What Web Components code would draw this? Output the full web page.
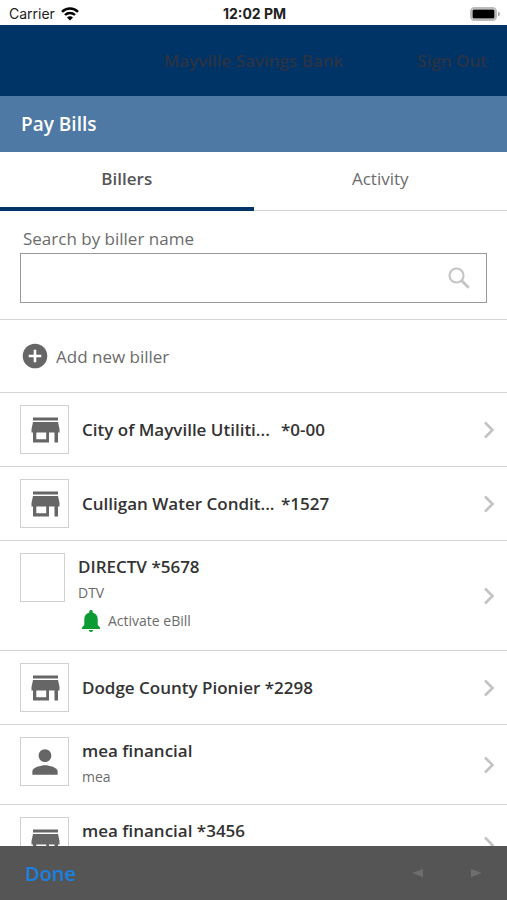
<!DOCTYPE html>
<html lang="en">
<head>
  <meta charset="utf-8">
  <meta name="viewport" content="width=device-width, initial-scale=1">
  <title>Pay Bills</title>
  <style>
    body {
      margin: 0;
      background: #fff;
      font-family: "Open Sans", "Noto Sans", sans-serif;
      font-size: 17px;
      color: #6b6b6b;
    }
  </style>
</head>
<body>

<pay-app>
  <status-bar slot="top" carrier="Carrier" time="12:02 PM"></status-bar>
  <bank-header slot="top" bank="Mayville Savings Bank"></bank-header>
  <page-title slot="top">Pay Bills</page-title>
  <tab-bar slot="top" tabs="Billers,Activity"></tab-bar>

  <biller-search label="Search by biller name"></biller-search>
  <add-biller>Add new biller</add-biller>
  <biller-row icon="store" account="*0-00" clipped>City of Mayville Utiliti...</biller-row>
  <biller-row icon="store" account="*1527" clipped>Culligan Water Condit...</biller-row>
  <biller-row icon="none" sub="DTV" ebill="Activate eBill">DIRECTV *5678</biller-row>
  <biller-row icon="store">Dodge County Pionier *2298</biller-row>
  <biller-row icon="person" sub="mea">mea financial</biller-row>
  <biller-row icon="store" sub="mea">mea financial *3456</biller-row>

  <tool-bar slot="bottom"></tool-bar>
</pay-app>

<script>
const icons = {
  store: `<svg width="30" height="30" viewBox="0 0 30 30" fill="#666"><path d="M3 2.500h25v3H3zM3 7h25l1.500 7v3.500H28V27.500h-3.500v-10H19v10H3v-10H1.500V14zM6.300 17.500v6.800h9.900v-6.800z" fill-rule="evenodd"/></svg>`,
  person: `<svg width="38" height="38" viewBox="0 0 24 24" fill="#666"><path d="M12 12c2.210 0 4-1.790 4-4s-1.790-4-4-4-4 1.790-4 4 1.790 4 4 4zm0 2c-2.670 0-8 1.340-8 4v2h16v-2c0-2.660-5.330-4-8-4z"/></svg>`,
  none: ''
}

class PayApp extends HTMLElement {
  constructor() {
    super();
    this.attachShadow({mode: 'open'}).innerHTML = `
    <style>
      :host {
        display: flex;
        flex-direction: column;
        height: 100vh;
      }
      main {
        flex: 1;
        min-height: 0;
        overflow: hidden;
      }
    </style>
    <slot name="top"></slot>
    <main><slot></slot></main>
    <slot name="bottom"></slot>`;
  }
}

class StatusBar extends HTMLElement {
  constructor() {
    super();
    this.attachShadow({mode: 'open'}).innerHTML = `
    <style>
      :host {
        display: grid;
        grid-template-columns: 1fr auto 1fr;
        align-items: center;
        height: 25px;
        padding: 2px 7px 0 9px;
        box-sizing: border-box;
        font-family: Inter, "Liberation Sans", sans-serif;
        font-size: 14px;
        color: #222;
      }
      .carrier {
        display: flex;
        align-items: center;
        gap: 6px;
      }
      .time {
        font-weight: 700;
      }
      .battery {
        justify-self: end;
      }
      svg {
        display: block;
      }
    </style>
    <span class="carrier">${this.getAttribute('carrier')}
      <svg width="18" height="14" viewBox="0 0 18 14" fill="none" stroke="#000" stroke-width="2.400">
        <path d="M1 4.800a11.400 11.400 0 0 1 16 0M4 8a7.100 7.100 0 0 1 10 0"/>
        <path d="M9 13.500 6 10.500a4.200 4.200 0 0 1 6 0z" fill="#000" stroke="none"/>
      </svg>
    </span>
    <span class="time">${this.getAttribute('time')}</span>
    <svg class="battery" width="30" height="14" viewBox="0 0 30 14">
      <rect x="1" y="1" width="25" height="12" rx="3.500" fill="#fff" stroke="#bbb" stroke-width="2"/>
      <rect x="2.500" y="2.500" width="22" height="9" rx="1.500" fill="#000"/>
      <path d="M28 4.500q2 .800 2 2.500t-2 2.500z" fill="#aaa"/>
    </svg>`;
  }
}

class BankHeader extends HTMLElement {
  constructor() {
    super();
    this.attachShadow({mode: 'open'}).innerHTML = `
    <style>
      :host {
        display: grid;
        grid-template-columns: 1fr auto 1fr;
        align-items: center;
        height: 71px;
        padding: 0 20px;
        background: #003366;
        color: #2b3445;
        font-weight: 600;
      }
      .bank {
        grid-column: 2;
      }
      button {
        justify-self: end;
        padding: 0;
        border: 0;
        background: none;
        font: inherit;
        color: inherit;
      }
    </style>
    <span class="bank">${this.getAttribute('bank')}</span>
    <button type="button">Sign Out</button>`;
  }
}

class PageTitle extends HTMLElement {
  constructor() {
    super();
    this.attachShadow({mode: 'open'}).innerHTML = `
    <style>
      :host {
        display: block;
        padding: 0 21px;
        background: #4e79a4;
        color: #fff;
      }
      h1 {
        margin: 0;
        font-size: 19px;
        font-weight: 600;
        line-height: 56px;
      }
    </style>
    <h1><slot></slot></h1>`;
  }
}

class TabBar extends HTMLElement {
  constructor() {
    super();
    const tabs = this.getAttribute('tabs').split(',')
    this.attachShadow({mode: 'open'}).innerHTML = `
    <style>
      :host {
        display: block;
      }
      div {
        display: flex;
      }
      button {
        flex: 1;
        height: 59px;
        padding: 0 0 5px;
        border: 0;
        border-bottom: 1px solid #d4d4d4;
        background: none;
        font: inherit;
        color: inherit;
      }
      button[aria-selected='true'] {
        padding-bottom: 2px;
        border-bottom: 4px solid #003366;
        font-weight: 600;
        color: #555;
      }
    </style>
    <div role="tablist">
      ${tabs.map((t, i) => `<button type="button" role="tab" aria-selected="${i === 0}">${t}</button>`).join('')}
    </div>`;

    const buttons = this.shadowRoot.querySelectorAll('button')
    buttons.forEach(b => b.addEventListener('click', () => {
      buttons.forEach(o => o.setAttribute('aria-selected', o === b))
    }))
  }
}

class BillerSearch extends HTMLElement {
  constructor() {
    super();
    this.attachShadow({mode: 'open'}).innerHTML = `
    <style>
      :host {
        display: block;
        padding: 14px 20px 16px;
        border-bottom: 1px solid #d4d4d4;
      }
      label {
        display: block;
        padding-left: 3px;
        line-height: 28px;
      }
      .box {
        display: flex;
        align-items: center;
        height: 48px;
        padding-right: 16px;
        border: 1px solid #999;
      }
      input {
        flex: 1;
        min-width: 0;
        height: 100%;
        box-sizing: border-box;
        padding: 0 12px;
        border: 0;
        outline: 0;
        background: none;
        font: inherit;
      }
    </style>
    <label for="search">${this.getAttribute('label')}</label>
    <div class="box">
      <input id="search" type="text">
      <svg width="22" height="22" viewBox="0 0 22 22" fill="none" stroke="#c6c6c6">
        <circle cx="8.500" cy="8.500" r="7" stroke-width="2.200"/>
        <path d="M13.500 13.500l7.200 7.200" stroke-width="3"/>
      </svg>
    </div>`;
  }
}

class AddBiller extends HTMLElement {
  constructor() {
    super();
    this.attachShadow({mode: 'open'}).innerHTML = `
    <style>
      :host {
        display: block;
        border-bottom: 1px solid #d4d4d4;
      }
      button {
        display: flex;
        align-items: center;
        gap: 8px;
        width: 100%;
        height: 72px;
        padding: 0 22px;
        border: 0;
        background: none;
        font: inherit;
        color: inherit;
      }
    </style>
    <button type="button">
      <svg width="26" height="26" viewBox="0 0 26 26">
        <circle cx="13" cy="13" r="12.300" fill="#666"/>
        <path d="M13 6.700v12.600M6.700 13h12.600" stroke="#fff" stroke-width="2.600"/>
      </svg>
      <slot></slot>
    </button>`;
  }
}

class BillerRow extends HTMLElement {
  constructor() {
    super();
    const icon = this.getAttribute('icon')
    const account = this.getAttribute('account')
    const sub = this.getAttribute('sub')
    const ebill = this.getAttribute('ebill')

    this.attachShadow({mode: 'open'}).innerHTML = `
    <style>
      :host {
        display: block;
        border-bottom: 1px solid #d4d4d4;
      }
      a {
        display: flex;
        align-items: center;
        gap: 13px;
        padding: 12px 12px 12px 20px;
        color: inherit;
        text-decoration: none;
      }
      .icon {
        display: flex;
        align-items: center;
        justify-content: center;
        align-self: flex-start;
        width: 49px;
        height: 49px;
        box-sizing: border-box;
        border: 1px solid #d0d0d0;
      }
      .icon.none {
        width: 45px;
      }
      .body {
        flex: 1;
        min-width: 0;
        line-height: 26px;
      }
      .body.lines {
        padding: 1px 0 2px;
      }
      .name {
        display: flex;
        gap: 4px;
        font-weight: 600;
        color: #333;
        white-space: nowrap;
      }
      :host([clipped]) .label {
        min-width: 195px;
      }
      .sub, .ebill {
        font-size: 14px;
      }
      .ebill {
        display: flex;
        align-items: center;
        gap: 8px;
        height: 30px;
        padding-left: 4px;
      }
    </style>
    <a href="#">
      <span class="icon ${icon}">${icons[icon]}</span>
      <div class="body ${sub ? 'lines' : ''}">
        <div class="name"><span class="label"><slot></slot></span>${account ? `<span>${account}</span>` : ''}</div>
        ${sub ? `<div class="sub">${sub}</div>` : ''}
        ${ebill ? `<div class="ebill">
          <svg width="18" height="22" viewBox="0 0 18 22" fill="#0a9b33"><path d="M9 0c1 0 1.700.700 1.700 1.700v.700c3 .800 5 3.300 5 6.600v6l2.300 2.500V19H0v-1.500L2.300 15V9c0-3.300 2-5.800 5-6.600v-.700C7.300.700 8 0 9 0zM6.800 20h4.400c0 1.200-1 2-2.200 2s-2.200-.800-2.200-2z"/></svg>
          ${ebill}
        </div>` : ''}
      </div>
      <svg width="12" height="18" viewBox="0 0 12 18" fill="none" stroke="#c2c2c2" stroke-width="2.500"><path d="M2 1.500 9.500 9 2 16.500"/></svg>
    </a>`;
  }
}

class ToolBar extends HTMLElement {
  constructor() {
    super();
    this.attachShadow({mode: 'open'}).innerHTML = `
    <style>
      :host {
        display: flex;
        align-items: center;
        gap: 46px;
        height: 54px;
        padding: 0 25px;
        box-sizing: border-box;
        background: #555;
      }
      button {
        padding: 0;
        border: 0;
        background: none;
        font: inherit;
        color: #1a80e0;
      }
      .done {
        margin-right: auto;
        font-size: 20px;
        font-weight: 600;
      }
      svg {
        display: block;
      }
    </style>
    <button type="button" class="done">Done</button>
    <button type="button" aria-label="Previous"><svg width="12" height="8" viewBox="0 0 12 8" fill="#6e6e6e"><path d="M0 4 11 0v8z"/></svg></button>
    <button type="button" aria-label="Next"><svg width="12" height="8" viewBox="0 0 12 8" fill="#6e6e6e"><path d="M12 4 1 0v8z"/></svg></button>`;
  }
}

window.customElements.define('pay-app', PayApp);
window.customElements.define('status-bar', StatusBar);
window.customElements.define('bank-header', BankHeader);
window.customElements.define('page-title', PageTitle);
window.customElements.define('tab-bar', TabBar);
window.customElements.define('biller-search', BillerSearch);
window.customElements.define('add-biller', AddBiller);
window.customElements.define('biller-row', BillerRow);
window.customElements.define('tool-bar', ToolBar);
</script>
</body>
</html>
